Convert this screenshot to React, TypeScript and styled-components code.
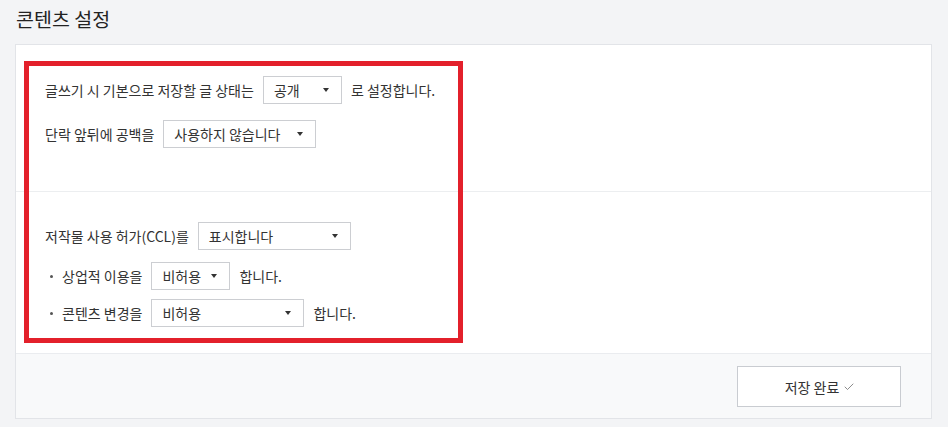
import React, { FC } from 'react'
import styled, { createGlobalStyle } from 'styled-components'
import { Check } from 'lucide-react'

const GlobalStyle = createGlobalStyle`
  body {
    margin: 0;
    background: #f3f4f6;
    font-family: 'Noto Sans CJK KR', 'Noto Sans', sans-serif;
    color: #333;
  }
`

type SelectProps = {
  value: string
  width: number
}

const Select: FC<SelectProps> = ({ value, width }) => (
  <SelectBox $width={width}>
    <span>{value}</span>
    <Arrow />
  </SelectBox>
)

const App: FC = () => (
  <>
    <GlobalStyle />
    <Title>콘텐츠 설정</Title>
    <Panel>
      <Section $top={31} $bottom={43}>
        <Rows $gap={16}>
          <Row>
            <Label>글쓰기 시 기본으로 저장할 글 상태는</Label>
            <Select value='공개' width={79} />
            <Label>로 설정합니다.</Label>
          </Row>
          <Row>
            <Label>단락 앞뒤에 공백을</Label>
            <Select value='사용하지 않습니다' width={153} />
          </Row>
        </Rows>
      </Section>
      <Section $top={30} $bottom={26} $divided>
        <Row>
          <Label>저작물 사용 허가(CCL)를</Label>
          <Select value='표시합니다' width={153} />
        </Row>
        <SubList>
          <SubItem>
            <Label>상업적 이용을</Label>
            <Select value='비허용' width={79} />
            <Label>합니다.</Label>
          </SubItem>
          <SubItem>
            <Label>콘텐츠 변경을</Label>
            <Select value='비허용' width={153} />
            <Label>합니다.</Label>
          </SubItem>
        </SubList>
      </Section>
      <Footer>
        <SaveButton>
          저장 완료
          <Check size={12} strokeWidth={1.5} color='#666' />
        </SaveButton>
      </Footer>
      <Highlight />
    </Panel>
  </>
)

const Title = styled.h2`
  margin: 0;
  padding: 6px 16px 12px;
  font-size: 19.5px;
  line-height: 26px;
  font-weight: 400;
  color: #222;
`

const Panel = styled.div`
  position: relative;
  margin: 0 16px 0 15px;
  border: 1px solid #e2e4e8;
  background: #fff;
`

const Section = styled.div<{ $top: number; $bottom: number; $divided?: boolean }>`
  padding: ${p => p.$top}px 30px ${p => p.$bottom}px 29px;
  border-top: ${p => (p.$divided ? '1px solid #eceef0' : 'none')};
`

const Rows = styled.div<{ $gap: number }>`
  display: flex;
  flex-direction: column;
  gap: ${p => p.$gap}px;
`

const Row = styled.div`
  display: flex;
  align-items: center;
  gap: 9px;
  height: 28px;
`

const Label = styled.span`
  font-size: 14px;
  line-height: 20px;
  color: #333;
  white-space: nowrap;
`

const SubList = styled.ul`
  list-style: none;
  margin: 12px 0 0;
  padding: 0;
  display: flex;
  flex-direction: column;
  gap: 9px;
`

const SubItem = styled.li`
  display: flex;
  align-items: center;
  gap: 9px;
  height: 28px;
  padding-left: 17px;
  position: relative;

  &::before {
    content: '';
    position: absolute;
    left: 5px;
    top: 13px;
    width: 3px;
    height: 3px;
    border-radius: 50%;
    background: #555;
  }
`

const SelectBox = styled.div<{ $width: number }>`
  box-sizing: border-box;
  width: ${p => p.$width}px;
  height: 28px;
  display: flex;
  align-items: center;
  justify-content: space-between;
  padding: 0 12px 0 10px;
  border: 1px solid #ccced2;
  background: #fff;
  font-size: 14px;
  color: #333;
  white-space: nowrap;
`

const Arrow = styled.i`
  width: 0;
  height: 0;
  border-left: 3.5px solid transparent;
  border-right: 3.5px solid transparent;
  border-top: 4px solid #333;
`

const Footer = styled.div`
  display: flex;
  justify-content: flex-end;
  padding: 12px 30px 11px;
  border-top: 1px solid #eaecef;
  background: #f8f9fa;
`

const SaveButton = styled.button`
  box-sizing: border-box;
  width: 164px;
  height: 41px;
  display: flex;
  align-items: center;
  justify-content: center;
  gap: 4px;
  border: 1px solid #c9ccd1;
  background: #fff;
  font-family: inherit;
  font-size: 14px;
  color: #333;
  padding: 0 0 0 2px;
`

const Highlight = styled.div`
  position: absolute;
  left: 8px;
  top: 16px;
  width: 439px;
  height: 282px;
  box-sizing: border-box;
  border: 5px solid #e3202b;
  pointer-events: none;
`

export default App
